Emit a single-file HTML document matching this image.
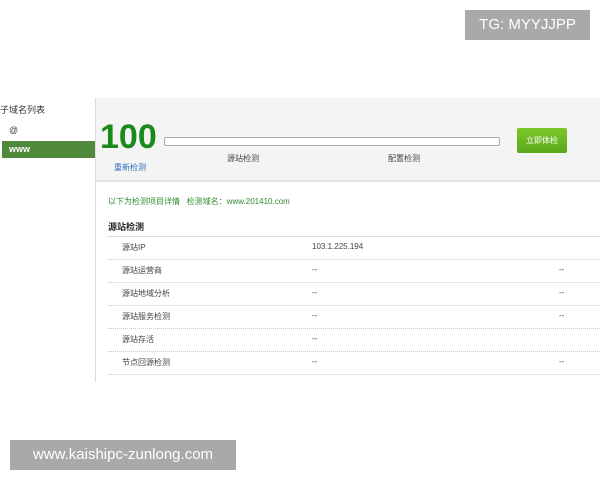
<!DOCTYPE html>
<html><head><meta charset="utf-8"><style>
body{margin:0;width:600px;height:480px;background:#fff;position:relative;overflow:hidden;font-family:"Liberation Sans","Noto Sans CJK SC",sans-serif;color:#333}
.a{position:absolute;white-space:nowrap}
.row{position:absolute;left:108px;width:492px;height:23px;border-bottom:1px dotted #ccc;font-size:8px;color:#444}
.row span{position:absolute;top:6px}
</style></head><body>
<div class="a" style="left:0;top:103px;font-size:9px;color:#333">子域名列表</div>
<div class="a" style="left:9px;top:125px;font-size:9px;color:#444">@</div>
<div class="a" style="left:2px;top:141px;width:93px;height:17px;background:#4f8a3c;color:#fff;font-size:9px;font-weight:bold;line-height:17px;text-indent:7px">www</div>
<div class="a" style="left:95px;top:98px;width:1px;height:284px;background:#ddd"></div>
<div class="a" style="left:96px;top:98px;width:504px;height:82px;background:#f4f4f4;border-bottom:2px solid #e4e4e4"></div>
<div class="a" style="left:100px;top:119px;font-size:34px;font-weight:bold;color:#1a8a1a;line-height:36px;letter-spacing:0">100</div>
<div class="a" style="left:114px;top:162px;font-size:8px;color:#2a6fc0">重新检测</div>
<div class="a" style="left:164px;top:137px;width:334px;height:7px;border:1px solid #aaa;border-radius:2px;background:#fff"></div>
<div class="a" style="left:227px;top:153px;font-size:8px;color:#444">源站检测</div>
<div class="a" style="left:388px;top:153px;font-size:8px;color:#444">配置检测</div>
<div class="a" style="left:517px;top:128px;width:50px;height:25px;background:linear-gradient(#7cc72a,#5aa81a);border-radius:2px;color:#fff;font-size:8px;line-height:25px;text-align:center">立即体检</div>
<div class="a" style="left:108px;top:196px;font-size:8px;color:#2e8b2e">以下为检测项目详情&nbsp;&nbsp;&nbsp;检测域名：www.201410.com</div>
<div class="a" style="left:108px;top:220px;font-size:9px;font-weight:bold;color:#222">源站检测</div>
<div class="a" style="left:107px;top:236px;width:493px;height:1px;background:#ddd"></div>
<div class="row" style="top:236px"><span style="left:14px">源站IP</span><span style="left:204px">103.1.225.194</span></div>
<div class="row" style="top:259px"><span style="left:14px">源站运营商</span><span style="left:204px">--</span><span style="left:451px">--</span></div>
<div class="row" style="top:282px"><span style="left:14px">源站地域分析</span><span style="left:204px">--</span><span style="left:451px">--</span></div>
<div class="row" style="top:305px"><span style="left:14px">源站服务检测</span><span style="left:204px">--</span><span style="left:451px">--</span></div>
<div class="row" style="top:328px"><span style="left:14px">源站存活</span><span style="left:204px">--</span></div>
<div class="row" style="top:351px"><span style="left:14px">节点回源检测</span><span style="left:204px">--</span><span style="left:451px">--</span></div>
<div class="a" style="left:465px;top:10px;width:125px;height:30px;background:#a9a9a9;color:#fff;font-size:15px;line-height:30px;text-align:center">TG: MYYJJPP</div>
<div class="a" style="left:10px;top:440px;width:226px;height:30px;background:#a9a9a9;color:#fff;font-size:15px;line-height:30px;text-align:center">www.kaishipc-zunlong.com</div>
</body></html>
